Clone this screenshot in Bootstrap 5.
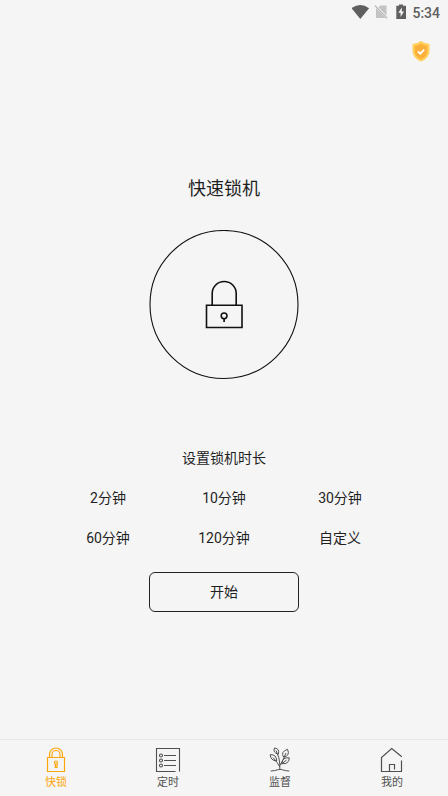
<!DOCTYPE html>
<html lang="zh-CN">
<head>
<meta charset="utf-8">
<meta name="viewport" content="width=device-width, initial-scale=1">
<title>快速锁机</title>
<link href="https://cdn.jsdelivr.net/npm/bootstrap@5.3.0/dist/css/bootstrap.min.css" rel="stylesheet">
<style>
body{background:#f5f5f5;color:#1f1f1f;font-family:Roboto,"Noto Sans CJK SC",sans-serif;font-size:14px;line-height:20px}
.screen{height:796px;overflow:hidden}
.status{height:24px;color:#5f5f5f;padding-right:8px}
.clock{font-size:14px;font-weight:500;line-height:24px;padding-top:1px}
.topbar{height:54px;padding:17px 18px 0}
.title{font-size:18px;line-height:26px;margin-top:98px;font-weight:400}
.dial{width:150px;height:150px;margin-top:28px}
.caption{margin-top:68px}
.times{width:348px;margin-top:10px}
.times button{height:40px;color:inherit;font-size:14px;line-height:20px}
.start{width:150px;height:40px;margin-top:14px;border:1px solid #222;border-radius:6px;font-size:14px;line-height:20px;padding:0;color:#1f1f1f}
.tabs{height:57px;border-top:1px solid #e9e9e9;font-size:11px;line-height:14px}
.tabs a{color:#505050;padding-top:7px}
.tabs a.active{color:#faa60c}
.tabs svg{margin-bottom:3px}
svg{display:block}
</style>
</head>
<body>
<div class="screen d-flex flex-column">
  <header>
    <div class="status d-flex justify-content-end align-items-center">
      <svg width="18" height="24" viewBox="0 0 18 24"><path d="M-.5 8.200Q8.300 1.700 17.100 8.200L8.300 18.900Z" fill="currentColor"/></svg>
      <svg class="ms-1" width="16" height="24" viewBox="0 0 16 24"><path d="M2 8V18H11.800ZM4.500 7.300L6.200 5.500H12.500V15.700Z" fill="#c3c3c3"/><path d="M1 5.700L13.200 18.300" stroke="#b5b5b5" stroke-width="1.200"/></svg>
      <svg class="ms-1" width="14" height="24" viewBox="0 0 14 24"><path d="M2.300 5.700H5V4.500H9V5.700H12V18.900H2.300Z" fill="currentColor"/><path d="M7.800 7.500L4.300 12.800H6.600V17L10 11.500H7.800Z" fill="#f5f5f5"/></svg>
      <span class="clock ms-1">5:34</span>
    </div>
    <div class="topbar d-flex justify-content-end">
      <svg width="18" height="21" viewBox="0 0 18 21"><path d="M9 0Q12.500 2.600 17.500 3V10Q17.500 17 9 20.500Q.5 17 .5 10V3Q5.500 2.600 9 0Z" fill="#ffd05a"/><path d="M9 2.500Q12 4.600 15.300 5V10Q15.300 15.600 9 18.200Q2.700 15.600 2.700 10V5Q6 4.600 9 2.500Z" fill="#fbb03b"/><path d="M5.900 10.500L8.200 12.600L12.200 8.600" fill="none" stroke="#fff" stroke-width="1.900"/></svg>
    </div>
  </header>
  <main class="flex-grow-1 d-flex flex-column align-items-center">
    <h1 class="title mb-0">快速锁机</h1>
    <div class="dial">
      <svg width="150" height="150" viewBox="0 0 150 150" fill="none" stroke="#111"><circle cx="75" cy="74.500" r="74" stroke-width="1.100"/><path d="M57.500 75.200H93V97.500H57.500ZM63.200 75.200V63.500A12 12 0 0 1 87.200 63.500V75.200" stroke-width="1.600"/><circle cx="75.100" cy="85.800" r="2.900" stroke-width="1.500"/><path d="M75.100 88.500V92" stroke-width="1.700"/></svg>
    </div>
    <div class="caption">设置锁机时长</div>
    <div class="times row g-0 text-center">
      <div class="col-4"><button class="btn border-0 p-0 w-100">2分钟</button></div>
      <div class="col-4"><button class="btn border-0 p-0 w-100">10分钟</button></div>
      <div class="col-4"><button class="btn border-0 p-0 w-100">30分钟</button></div>
      <div class="col-4"><button class="btn border-0 p-0 w-100">60分钟</button></div>
      <div class="col-4"><button class="btn border-0 p-0 w-100">120分钟</button></div>
      <div class="col-4"><button class="btn border-0 p-0 w-100">自定义</button></div>
    </div>
    <button class="btn start">开始</button>
  </main>
  <nav class="tabs d-flex flex-shrink-0">
    <a href="#" class="active w-25 d-flex flex-column align-items-center text-decoration-none">
      <svg width="26" height="26" viewBox="0 0 26 26" fill="none" stroke="currentColor" stroke-width="1.200"><path d="M4.500 10.500H21.500V24.500H4.500ZM6.500 10.500V7.500A6.500 6.500 0 0 1 19.500 7.500V10.500M9 10.500V7.500A4 4 0 0 1 17 7.500V10.500"/><circle cx="13" cy="15.500" r="1.500"/><path d="M12.300 17V20.300H14V17"/></svg>
      <span>快锁</span>
    </a>
    <a href="#" class="w-25 d-flex flex-column align-items-center text-decoration-none">
      <svg width="26" height="26" viewBox="0 0 26 26" fill="none" stroke="currentColor" stroke-width="1.100"><path d="M20.500 24.500H1.500V1.500H24.500V24.500M9 8.500H21M9 13.500H21M9 18.500H21"/><circle cx="6" cy="8.500" r="1.500"/><circle cx="6" cy="13.500" r="1.500"/><circle cx="6" cy="18.500" r="1.500"/></svg>
      <span>定时</span>
    </a>
    <a href="#" class="w-25 d-flex flex-column align-items-center text-decoration-none">
      <svg width="26" height="26" viewBox="0 0 26 26" fill="none" stroke="currentColor" stroke-width="1"><path d="M3.700 24Q8 23.800 10.500 22.800Q13 21.800 15.500 22.800Q18 23.800 22.300 24M12.800 22V17Q12.800 11 9 3.500M12.800 20Q11 16 6 10.500M12.800 18.500Q16 14 19 6M14 17.300L19.500 13.200"/><path d="M11.300 7.300Q5.500 5.500 7.500 1Q13 1.500 11.300 7.300ZM9.600 14Q3.500 13.500 3.200 7.700Q9.800 7.200 9.600 14ZM16.500 10Q13.300 5 20.500 2.300Q23.500 9 16.500 10ZM15 16.600Q15 10 22.300 10.800Q22 17.600 15 16.600Z"/></svg>
      <span>监督</span>
    </a>
    <a href="#" class="w-25 d-flex flex-column align-items-center text-decoration-none">
      <svg width="26" height="26" viewBox="0 0 26 26" fill="none" stroke="currentColor" stroke-width="1.200"><path d="M22.800 9.800L12.700 1.500L2.500 10.500V24.500H22.500V13.500M10.500 24.500V17.500H15.500V22.500"/></svg>
      <span>我的</span>
    </a>
  </nav>
</div>
<script src="https://cdn.jsdelivr.net/npm/bootstrap@5.3.0/dist/js/bootstrap.bundle.min.js"></script>
</body>
</html>
